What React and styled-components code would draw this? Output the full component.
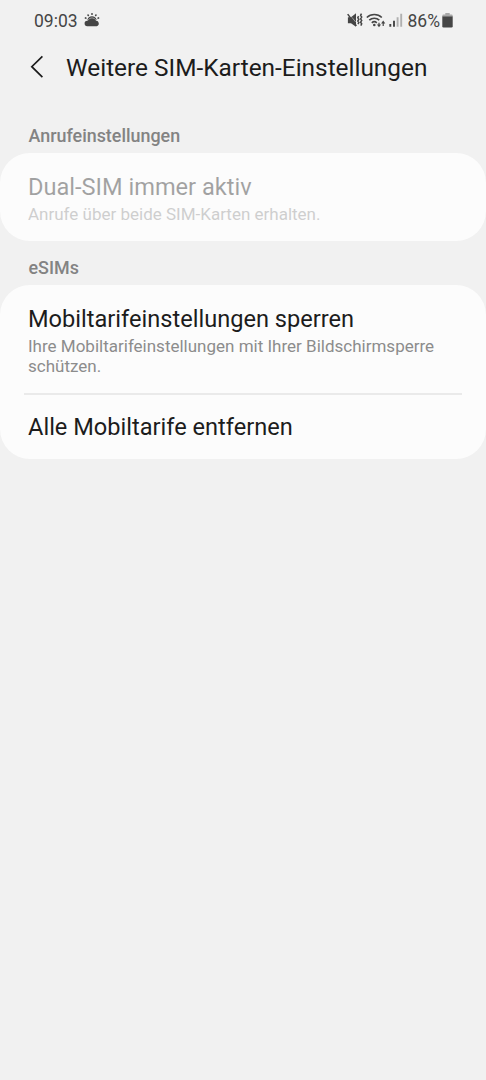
import React from 'react'
import styled, { createGlobalStyle } from 'styled-components'

export default function App(){
  return(
    <>
      <GlobalStyle />
      <Screen>
        <StatusBar>
          <Clock>09:03</Clock>
          <WeatherIcon />
          <StatusIcons>
            <MuteIcon />
            <WifiIcon />
            <SignalIcon />
            <Percent>86%</Percent>
            <BatteryIcon />
          </StatusIcons>
        </StatusBar>
        <Header>
          <BackButton aria-label="Zurück">
            <svg width="14" height="24" viewBox="0 0 14 24" fill="none" stroke="#1c1c1c" strokeWidth="1.7">
              <path d="M12.4 1.3 L1.8 11.7 L12.4 22.1" />
            </svg>
          </BackButton>
          <Title>Weitere SIM-Karten-Einstellungen</Title>
        </Header>
        <SectionLabel>Anrufeinstellungen</SectionLabel>
        <Card>
          <Row $disabled>
            <RowTitle>Dual-SIM immer aktiv</RowTitle>
            <RowText>Anrufe über beide SIM-Karten erhalten.</RowText>
          </Row>
        </Card>
        <SectionLabel>eSIMs</SectionLabel>
        <Card>
          <Row>
            <RowTitle>Mobiltarifeinstellungen sperren</RowTitle>
            <RowText>Ihre Mobiltarifeinstellungen mit Ihrer Bildschirmsperre schützen.</RowText>
          </Row>
          <Divider />
          <Row $single>
            <RowTitle>Alle Mobiltarife entfernen</RowTitle>
          </Row>
        </Card>
      </Screen>
    </>
  )
}

function WeatherIcon(){
  return(
    <svg width="16" height="16" viewBox="0 0 16 16" fill="#454545">
      <path d="M3.4 8a4.700 4.700 0 0 1 9.200 0l-1 .7H4.400z" />
      <path d="M3.400 14.200a2.700 2.700 0 0 1-.2-5.400 1 1 0 0 1 .9-.2 4.200 4.200 0 0 1 7.700.1 2.800 2.800 0 0 1 .9 5.500z" />
      <path d="M8 1v1.900M3.600 2.500l1.100 1.500M12.400 2.500l-1.100 1.500M.8 5.700l1.700.8M15.200 5.700l-1.700.8" stroke="#454545" strokeWidth="1.400" />
      <path d="M4 8.200a4.600 4.600 0 0 1 8 0" fill="none" stroke="#f1f1f1" strokeWidth=".5" />
    </svg>
  )
}

function MuteIcon(){
  return(
    <svg width="16" height="16" viewBox="0 0 16 16" fill="#454545">
      <path d="M.9 5.200h3.100L9 1.300v13.400L4 11.200H.9z" />
      <path d="M.7 2.100 9.400 13.900" stroke="#454545" strokeWidth="1.500" />
      <path d="M4.900 5.300 8.700 10" stroke="#f1f1f1" strokeWidth=".5" />
      <path d="M11.600 4.200l-.8 1.600 1 1.600-1 1.600 1 1.600-.8 1.600M14.500 1.600l-.9 1.700 1.100 1.800-1.100 1.700 1.100 1.700-1.100 1.700 1.100 1.700-.9 1.700" fill="none" stroke="#454545" strokeWidth="1.500" />
    </svg>
  )
}

function WifiIcon(){
  return(
    <svg width="20" height="16" viewBox="0 0 20 16" fill="none" stroke="#454545" strokeWidth="1.600">
      <path d="M.8 5.500a10.700 10.700 0 0 1 15 0M3.300 8.200a7.200 7.200 0 0 1 10 0M5.800 10.800a3.700 3.700 0 0 1 5 0" />
      <circle cx="8.300" cy="13" r="1.300" fill="#454545" stroke="none" />
      <path d="M13 10.800v2.600M17.200 14v-3.600" strokeWidth="1.200" />
      <path d="M10.900 12.400h4.200L13 15.200zM15.100 11.500h4.200l-2.100-2.900z" fill="#454545" stroke="none" />
    </svg>
  )
}

function SignalIcon(){
  return(
    <svg width="14" height="14" viewBox="0 0 14 14">
      <path d="M1.300 13.800v-2.800M5 13.800V7.800" stroke="#454545" strokeWidth="1.900" />
      <path d="M8.600 13.800V4.300M12.200 13.800V.8" stroke="#b0b0b0" strokeWidth="1.900" />
    </svg>
  )
}

function BatteryIcon(){
  return(
    <svg width="11" height="15" viewBox="0 0 11 15">
      <path d="M3.300 0h4.400v1.600H9.500a1.200 1.200 0 0 1 1.200 1.200V4H.3V2.800a1.200 1.200 0 0 1 1.200-1.200H3.300z" fill="#a8a8a8" />
      <path d="M.3 3.500h10.400v9.800a1.200 1.200 0 0 1-1.200 1.200H1.500a1.200 1.200 0 0 1-1.200-1.200z" fill="#454545" />
    </svg>
  )
}

const GlobalStyle = createGlobalStyle`
  body {
    margin: 0;
    background-color: #f1f1f1;
  }
  `

const Screen = styled.div`
  display: flex;
  flex-direction: column;
  min-height: 1080px;
  box-sizing: border-box;
  background-color: #f1f1f1;
  color: #1c1c1c;
  font-family: Roboto, sans-serif;
  `

const StatusBar = styled.div`
  display: flex;
  align-items: center;
  height: 40px;
  padding: 0 33px 0 34px;
  color: #454545;
  font-size: 17.5px;
  `

const Clock = styled.span`
  width: 50px;
  line-height: 20px;
  padding-top: 2px;
  `

const StatusIcons = styled.div`
  display: flex;
  align-items: center;
  margin-left: auto;
  gap: 3px;

  svg {
    flex-shrink: 0;
  }
  `

const Percent = styled.span`
  margin: 0 -1px 0 2px;
  line-height: 20px;
  padding-top: 2px;
  `

const Header = styled.header`
  display: flex;
  align-items: center;
  height: 54px;
  margin-bottom: 15px;
  padding-left: 30px;
  `

const BackButton = styled.button`
  display: flex;
  width: 36px;
  padding: 0;
  border: none;
  background: none;
  cursor: pointer;
  `

const Title = styled.h1`
  margin: 0;
  font-size: 24.4px;
  font-weight: 400;
  white-space: nowrap;
  `

const SectionLabel = styled.h2`
  margin: 0;
  padding: 15px 28px 6px 28.5px;
  font-size: 17.9px;
  line-height: 23px;
  font-weight: 500;
  color: #838383;
  `

const Card = styled.section`
  border-radius: 30px;
  background-color: #fcfcfc;
  `

const Row = styled.div`
  padding: ${props => props.$single ? '17px 28px' : '19px 28px 16px'};
  opacity: ${props => props.$disabled ? 0.4 : 1};
  `

const RowTitle = styled.div`
  font-size: 23.6px;
  line-height: 30px;
  white-space: nowrap;
  `

const RowText = styled.div`
  margin: 2px 0 1px;
  font-size: 17px;
  line-height: 20px;
  color: #8c8c8c;
  `

const Divider = styled.div`
  height: 2px;
  margin: 0 24px;
  background-color: #eaeaea;
  `
